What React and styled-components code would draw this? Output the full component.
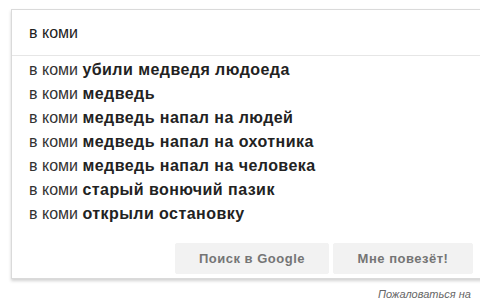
import React from "react";
import styled, { createGlobalStyle } from "styled-components";

const Global = createGlobalStyle`
  html, body { margin: 0; padding: 0; background: #fff; }
  body { font-family: "Liberation Sans", Arial, sans-serif; overflow: hidden; width: 480px; height: 300px; }
`;

const Page = styled.div`
  padding: 9px 0 0 11px;
  width: 480px;
  height: 300px;
  box-sizing: border-box;
  position: relative;
  overflow: hidden;
`;

const Box = styled.div`
  width: 500px;
  border: 1px solid #dadada;
  box-shadow: 0 2px 3px rgba(0, 0, 0, 0.18);
  background: #fff;
  box-sizing: border-box;
`;

const InputRow = styled.div`
  height: 45px;
  display: flex;
  align-items: center;
  padding-left: 17px;
  font-size: 16px;
  color: #222;
  border-bottom: 1px solid #e6e6e6;
`;

const List = styled.ul`
  list-style: none;
  margin: 0;
  padding: 2px 0 0 0;
`;

const Item = styled.li`
  height: 24px;
  line-height: 24px;
  padding-left: 17px;
  font-size: 16px;
  color: #333;
  white-space: nowrap;
`;

const Strong = styled.b`
  font-weight: bold;
  color: #222;
  letter-spacing: 0.45px;
`;

const Buttons = styled.div`
  display: flex;
  gap: 4px;
  padding: 17px 0 4px 163px;
`;

const Btn = styled.div`
  width: ${p => p.$w}px;
  height: 31px;
  background: #f2f2f2;
  border: 1px solid #f2f2f2;
  border-radius: 2px;
  box-sizing: border-box;
  display: flex;
  align-items: center;
  justify-content: center;
  font-size: 13px;
  font-weight: bold;
  letter-spacing: 0.5px;
  color: #757575;
`;

const Footer = styled.div`
  position: absolute;
  left: 378px;
  top: 288px;
  font-size: 11px;
  font-style: italic;
  color: #666;
  white-space: nowrap;
`;

const items = [
  "убили медведя людоеда",
  "медведь",
  "медведь напал на людей",
  "медведь напал на охотника",
  "медведь напал на человека",
  "старый вонючий пазик",
  "открыли остановку",
];

export default function App() {
  return (
    <>
      <Global />
      <Page>
        <Box>
          <InputRow>в коми</InputRow>
          <List>
            {items.map((t) => (
              <Item key={t}>
                в коми <Strong>{t}</Strong>
              </Item>
            ))}
          </List>
          <Buttons>
            <Btn $w={154}>Поиск в Google</Btn>
            <Btn $w={140}>Мне повезёт!</Btn>
          </Buttons>
        </Box>
        <Footer>Пожаловаться на</Footer>
      </Page>
    </>
  );
}
